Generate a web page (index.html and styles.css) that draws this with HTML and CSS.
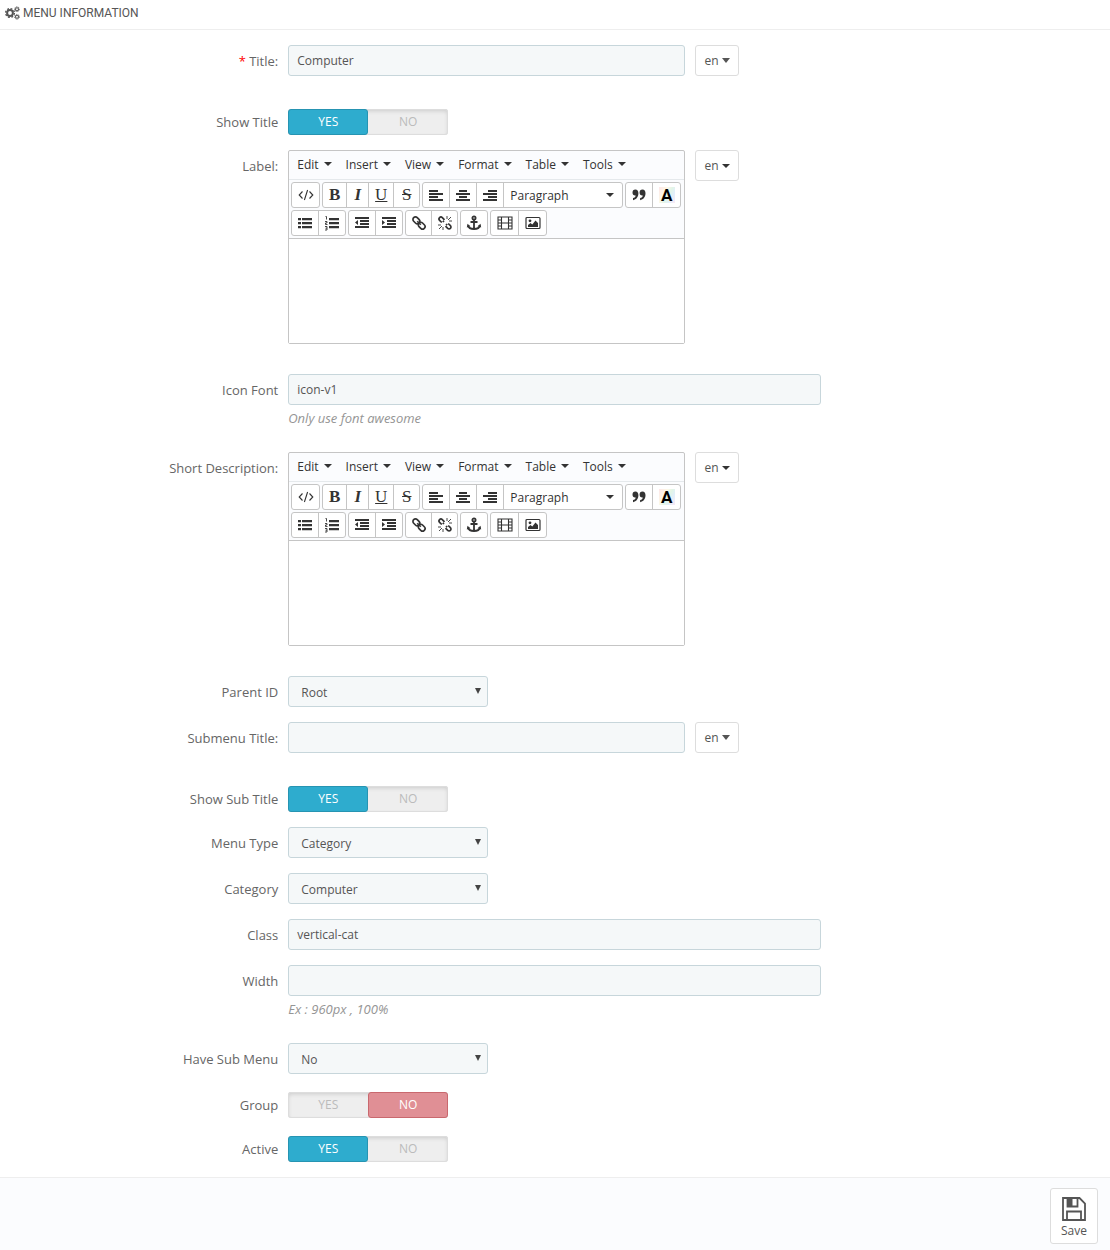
FILE: index.html
```html
<!DOCTYPE html>
<html lang="en">
<head>
    <meta charset="UTF-8">
    <meta name="viewport" content="width=device-width, initial-scale=1.0">
    <title>Menu Information</title>
    <link rel="stylesheet" href="styles.css">
</head>
<body>
    <!-- icon sprite -->
    <svg class="sprite" aria-hidden="true">
        <symbol id="i-cogs" viewBox="0 0 15 14">
            <circle cx="5" cy="7" r="2.9" fill="none" stroke="currentColor" stroke-width="2"/>
            <circle cx="5" cy="7" r="4.4" fill="none" stroke="currentColor" stroke-width="1.4" stroke-dasharray="1.9 1.556"/>
            <circle cx="12" cy="3.2" r="1.5" fill="none" stroke="currentColor" stroke-width="1.1"/>
            <circle cx="12" cy="3.2" r="2.4" fill="none" stroke="currentColor" stroke-width=".9" stroke-dasharray="1.1 .785"/>
            <circle cx="12" cy="10.8" r="1.5" fill="none" stroke="currentColor" stroke-width="1.1"/>
            <circle cx="12" cy="10.8" r="2.4" fill="none" stroke="currentColor" stroke-width=".9" stroke-dasharray="1.1 .785"/>
        </symbol>
        <symbol id="i-code" viewBox="0 0 16 16">
            <path d="M4.5 4.5L1.2 8l3.3 3.5M11.5 4.5L14.8 8l-3.3 3.5M9.6 3L6.4 13" fill="none" stroke="currentColor" stroke-width="1.1"/>
        </symbol>
        <symbol id="i-left" viewBox="0 0 16 16">
            <path d="M1 3h9v2H1zM1 6h14v2H1zM1 9h9v2H1zM1 12h14v2H1z"/>
        </symbol>
        <symbol id="i-center" viewBox="0 0 16 16">
            <path d="M4 3h8v2H4zM1 6h14v2H1zM4 9h8v2H4zM1 12h14v2H1z"/>
        </symbol>
        <symbol id="i-right" viewBox="0 0 16 16">
            <path d="M6 3h9v2H6zM1 6h14v2H1zM6 9h9v2H6zM1 12h14v2H1z"/>
        </symbol>
        <symbol id="i-quote" viewBox="0 0 16 16">
            <path d="M1.5 5.5a2.9 2.9 0 0 1 2.9-2.9C6.300 2.600 7.400 4 7.400 6.300c0 3.600-2 6.300-5.400 6.900V10.900c1.600-.3 2.500-1.200 2.700-2.500A2.900 2.900 0 0 1 1.500 5.500zM8.600 5.500a2.900 2.900 0 0 1 2.900-2.900c1.900 0 3 1.400 3 3.700 0 3.600-2 6.300-5.400 6.900V10.900c1.600-.3 2.500-1.200 2.700-2.500A2.900 2.900 0 0 1 8.600 5.500z"/>
        </symbol>
        <symbol id="i-ul" viewBox="0 0 16 16">
            <path d="M1 3h3v2.300H1zM1 7h3v2.300H1zM1 11h3v2.300H1zM5 3h10v2.300H5zM5 7h10v2.300H5zM5 11h10v2.300H5z"/>
        </symbol>
        <symbol id="i-ol" viewBox="0 0 16 16">
            <path d="M5 3h10v2.300H5zM5 7h10v2.300H5zM5 11h10v2.300H5z"/>
            <path d="M1.500 1.500h1v3M1 6.500h2v1.500H1.500v1.500H3.500M1 11.500h2v3.500H1M1.500 13.200H3" fill="none" stroke="currentColor" stroke-width=".9"/>
        </symbol>
        <symbol id="i-outdent" viewBox="0 0 16 16">
            <path d="M1 2h14v2H1zM6 5h9v2H6zM6 8h9v2H6zM1 11h14v2H1zM4 5v5L1 7.500z"/>
        </symbol>
        <symbol id="i-indent" viewBox="0 0 16 16">
            <path d="M1 2h14v2H1zM6 5h9v2H6zM6 8h9v2H6zM1 11h14v2H1zM1 5v5l3-2.500z"/>
        </symbol>
        <symbol id="i-link" viewBox="0 0 16 16">
            <g fill="none" stroke="currentColor" stroke-width="1.700" transform="rotate(45 8 8)">
                <rect x="0.500" y="5.500" width="7.500" height="5" rx="2.500"/>
                <rect x="8" y="5.500" width="7.500" height="5" rx="2.500"/>
                <path d="M5.500 8h5"/>
            </g>
        </symbol>
        <symbol id="i-unlink" viewBox="0 0 16 16">
            <g fill="none" stroke="currentColor" stroke-width="1.700">
                <path d="M7.500 4.800L5.300 2.600a1.900 1.900 0 0 0-2.700 2.700L4.800 7.500M8.500 11.200l2.200 2.200a1.900 1.900 0 0 0 2.700-2.700L11.200 8.500M5.800 5.800l1.200 1.200M9 9l1.200 1.200"/>
                <path d="M10 1v3M14 2l-3 3M15 6h-3M1 10h3M2 14l3-3M6 15v-3" stroke-width=".9"/>
            </g>
        </symbol>
        <symbol id="i-anchor" viewBox="0 0 16 16">
            <g fill="none" stroke="currentColor" stroke-width="1.800">
                <circle cx="8" cy="3" r="1.600"/>
                <path d="M8 4.500V14M4.500 7h7M2 10.500c.5 2.300 2.800 3.500 6 3.500s5.500-1.200 6-3.500"/>
            </g>
            <path d="M.8 12.500l.7-3.700 3 2.400zM15.200 12.500l-.7-3.700-3 2.400z"/>
        </symbol>
        <symbol id="i-film" viewBox="0 0 16 16">
            <path d="M1 2h14v12H1zM4.500 2v12M11.500 2v12M4.500 8h7M1 5h3.500M1 8h3.500M1 11h3.500M11.500 5H15M11.500 8H15M11.500 11H15" fill="none" stroke="currentColor" stroke-width="1.100"/>
        </symbol>
        <symbol id="i-image" viewBox="0 0 16 16">
            <rect x="1" y="2.500" width="14" height="11" rx="1" fill="none" stroke="currentColor" stroke-width="1.200"/>
            <circle cx="5" cy="5.800" r="1.400"/>
            <path d="M3 12V10l2.500-2 1.800 1.600L10.500 5.500 13 8v4z"/>
        </symbol>
        <symbol id="i-save" viewBox="0 0 24 24">
            <path d="M1 1h16.500L23 6.500V23H1zM5 23v-8.500h14V23M5.500 1v8.500H15.500V1" fill="none" stroke="currentColor" stroke-width="1.800"/>
            <path d="M5.500 1h5v8.500h-5z"/>
        </symbol>
    </svg>

    <form class="panel">
        <h3 class="panel-heading"><svg><use href="#i-cogs"/></svg>Menu Information</h3>

        <div class="form-wrapper">
            <div class="form-group lang-group">
                <label class="control-label" for="title"><span class="required">*</span> Title:</label>
                <div class="field">
                    <div class="col-half"><input type="text" class="form-control" id="title" value="Computer"></div>
                    <button type="button" class="btn-lang">en<i class="caret-fa"></i></button>
                </div>
            </div>

            <div class="form-group">
                <span class="control-label" id="show-title">Show Title</span>
                <div class="field">
                    <div class="switch" role="radiogroup" aria-labelledby="show-title">
                        <input type="radio" name="show_title" id="show_title_on" checked><label for="show_title_on">Yes</label>
                        <input type="radio" name="show_title" id="show_title_off" class="off"><label for="show_title_off">No</label>
                    </div>
                </div>
            </div>

            <div class="form-group lang-group">
                <label class="control-label" for="label">Label:</label>
                <div class="field">
                    <div class="col-half">
                        <div class="editor">
                            <div class="menubar">
                                <button type="button">Edit<i class="caret"></i></button>
                                <button type="button">Insert<i class="caret"></i></button>
                                <button type="button">View<i class="caret"></i></button>
                                <button type="button">Format<i class="caret"></i></button>
                                <button type="button">Table<i class="caret"></i></button>
                                <button type="button">Tools<i class="caret"></i></button>
                            </div>
                            <div class="toolbar">
                                <div class="btn-group btn-code">
                                    <button type="button" aria-label="Source code"><svg><use href="#i-code"/></svg></button>
                                </div>
                                <div class="btn-group btn-text">
                                    <button type="button" class="bold">B</button>
                                    <button type="button" class="italic">I</button>
                                    <button type="button" class="underline">U</button>
                                    <button type="button" class="strike">S</button>
                                </div>
                                <div class="btn-group">
                                    <button type="button" aria-label="Align left"><svg><use href="#i-left"/></svg></button>
                                    <button type="button" aria-label="Align center"><svg><use href="#i-center"/></svg></button>
                                    <button type="button" aria-label="Align right"><svg><use href="#i-right"/></svg></button>
                                    <div class="format-select">
                                        <select aria-label="Block format"><option>Paragraph</option></select>
                                        <i class="caret"></i>
                                    </div>
                                </div>
                                <div class="btn-group">
                                    <button type="button" aria-label="Blockquote"><svg><use href="#i-quote"/></svg></button>
                                    <button type="button" class="color" aria-label="Text color"><span>A</span></button>
                                </div>
                                <div class="btn-group">
                                    <button type="button" aria-label="Bullet list"><svg><use href="#i-ul"/></svg></button>
                                    <button type="button" aria-label="Numbered list"><svg><use href="#i-ol"/></svg></button>
                                </div>
                                <div class="btn-group">
                                    <button type="button" aria-label="Decrease indent"><svg><use href="#i-outdent"/></svg></button>
                                    <button type="button" aria-label="Increase indent"><svg><use href="#i-indent"/></svg></button>
                                </div>
                                <div class="btn-group btn-link">
                                    <button type="button" aria-label="Insert link"><svg><use href="#i-link"/></svg></button>
                                    <button type="button" aria-label="Remove link"><svg><use href="#i-unlink"/></svg></button>
                                </div>
                                <div class="btn-group">
                                    <button type="button" aria-label="Anchor"><svg><use href="#i-anchor"/></svg></button>
                                </div>
                                <div class="btn-group btn-media">
                                    <button type="button" aria-label="Insert video"><svg><use href="#i-film"/></svg></button>
                                    <button type="button" aria-label="Insert image"><svg><use href="#i-image"/></svg></button>
                                </div>
                            </div>
                            <textarea id="label"></textarea>
                        </div>
                    </div>
                    <button type="button" class="btn-lang">en<i class="caret"></i></button>
                </div>
            </div>

            <div class="form-group">
                <label class="control-label" for="icon">Icon Font</label>
                <div class="field">
                    <div class="col-wide">
                        <input type="text" class="form-control" id="icon" value="icon-v1">
                        <p class="help-block">Only use font awesome</p>
                    </div>
                </div>
            </div>

            <div class="form-group lang-group">
                <label class="control-label" for="description">Short Description:</label>
                <div class="field">
                    <div class="col-half">
                        <div class="editor">
                            <div class="menubar">
                                <button type="button">Edit<i class="caret"></i></button>
                                <button type="button">Insert<i class="caret"></i></button>
                                <button type="button">View<i class="caret"></i></button>
                                <button type="button">Format<i class="caret"></i></button>
                                <button type="button">Table<i class="caret"></i></button>
                                <button type="button">Tools<i class="caret"></i></button>
                            </div>
                            <div class="toolbar">
                                <div class="btn-group btn-code">
                                    <button type="button" aria-label="Source code"><svg><use href="#i-code"/></svg></button>
                                </div>
                                <div class="btn-group btn-text">
                                    <button type="button" class="bold">B</button>
                                    <button type="button" class="italic">I</button>
                                    <button type="button" class="underline">U</button>
                                    <button type="button" class="strike">S</button>
                                </div>
                                <div class="btn-group">
                                    <button type="button" aria-label="Align left"><svg><use href="#i-left"/></svg></button>
                                    <button type="button" aria-label="Align center"><svg><use href="#i-center"/></svg></button>
                                    <button type="button" aria-label="Align right"><svg><use href="#i-right"/></svg></button>
                                    <div class="format-select">
                                        <select aria-label="Block format"><option>Paragraph</option></select>
                                        <i class="caret"></i>
                                    </div>
                                </div>
                                <div class="btn-group">
                                    <button type="button" aria-label="Blockquote"><svg><use href="#i-quote"/></svg></button>
                                    <button type="button" class="color" aria-label="Text color"><span>A</span></button>
                                </div>
                                <div class="btn-group">
                                    <button type="button" aria-label="Bullet list"><svg><use href="#i-ul"/></svg></button>
                                    <button type="button" aria-label="Numbered list"><svg><use href="#i-ol"/></svg></button>
                                </div>
                                <div class="btn-group">
                                    <button type="button" aria-label="Decrease indent"><svg><use href="#i-outdent"/></svg></button>
                                    <button type="button" aria-label="Increase indent"><svg><use href="#i-indent"/></svg></button>
                                </div>
                                <div class="btn-group btn-link">
                                    <button type="button" aria-label="Insert link"><svg><use href="#i-link"/></svg></button>
                                    <button type="button" aria-label="Remove link"><svg><use href="#i-unlink"/></svg></button>
                                </div>
                                <div class="btn-group">
                                    <button type="button" aria-label="Anchor"><svg><use href="#i-anchor"/></svg></button>
                                </div>
                                <div class="btn-group btn-media">
                                    <button type="button" aria-label="Insert video"><svg><use href="#i-film"/></svg></button>
                                    <button type="button" aria-label="Insert image"><svg><use href="#i-image"/></svg></button>
                                </div>
                            </div>
                            <textarea id="description"></textarea>
                        </div>
                    </div>
                    <button type="button" class="btn-lang">en<i class="caret"></i></button>
                </div>
            </div>

            <div class="form-group">
                <label class="control-label" for="parent">Parent ID</label>
                <div class="field">
                    <div class="select"><select class="form-control" id="parent"><option>Root</option></select></div>
                </div>
            </div>

            <div class="form-group lang-group">
                <label class="control-label" for="submenu">Submenu Title:</label>
                <div class="field">
                    <div class="col-half"><input type="text" class="form-control" id="submenu"></div>
                    <button type="button" class="btn-lang">en<i class="caret-fa"></i></button>
                </div>
            </div>

            <div class="form-group">
                <span class="control-label" id="show-sub">Show Sub Title</span>
                <div class="field">
                    <div class="switch" role="radiogroup" aria-labelledby="show-sub">
                        <input type="radio" name="show_sub" id="show_sub_on" checked><label for="show_sub_on">Yes</label>
                        <input type="radio" name="show_sub" id="show_sub_off" class="off"><label for="show_sub_off">No</label>
                    </div>
                </div>
            </div>

            <div class="form-group">
                <label class="control-label" for="type">Menu Type</label>
                <div class="field">
                    <div class="select"><select class="form-control" id="type"><option>Category</option></select></div>
                </div>
            </div>

            <div class="form-group">
                <label class="control-label" for="category">Category</label>
                <div class="field">
                    <div class="select"><select class="form-control" id="category"><option>Computer</option></select></div>
                </div>
            </div>

            <div class="form-group">
                <label class="control-label" for="class">Class</label>
                <div class="field">
                    <div class="col-wide"><input type="text" class="form-control" id="class" value="vertical-cat"></div>
                </div>
            </div>

            <div class="form-group">
                <label class="control-label" for="width">Width</label>
                <div class="field">
                    <div class="col-wide">
                        <input type="text" class="form-control" id="width">
                        <p class="help-block">Ex : 960px , 100%</p>
                    </div>
                </div>
            </div>

            <div class="form-group">
                <label class="control-label" for="have-sub">Have Sub Menu</label>
                <div class="field">
                    <div class="select"><select class="form-control" id="have-sub"><option>No</option></select></div>
                </div>
            </div>

            <div class="form-group">
                <span class="control-label" id="group">Group</span>
                <div class="field">
                    <div class="switch" role="radiogroup" aria-labelledby="group">
                        <input type="radio" name="group" id="group_on"><label for="group_on">Yes</label>
                        <input type="radio" name="group" id="group_off" class="off" checked><label for="group_off">No</label>
                    </div>
                </div>
            </div>

            <div class="form-group">
                <span class="control-label" id="active">Active</span>
                <div class="field">
                    <div class="switch" role="radiogroup" aria-labelledby="active">
                        <input type="radio" name="active" id="active_on" checked><label for="active_on">Yes</label>
                        <input type="radio" name="active" id="active_off" class="off"><label for="active_off">No</label>
                    </div>
                </div>
            </div>
        </div>

        <div class="panel-footer">
            <button type="submit" class="btn-save"><svg><use href="#i-save"/></svg>Save</button>
        </div>
    </form>
</body>
</html>
```

FILE: styles.css
```css
* {
    box-sizing: border-box;
}

body {
    margin: 0;
    font-family: "Open Sans", sans-serif;
    font-size: 12px;
    color: #555;
    background-color: #fff;
}

button, input, select, textarea {
    font: inherit;
    color: inherit;
}

button {
    padding: 0;
    cursor: pointer;
}

svg {
    fill: currentColor;
}

.sprite {
    display: none;
}

.panel-heading {
    display: flex;
    align-items: center;
    gap: 3px;
    height: 30px;
    margin: 0;
    padding: 0 5px 4px;
    border-bottom: 1px solid #eee;
    font-family: "Roboto", sans-serif;
    font-size: 12px;
    font-weight: normal;
    text-transform: uppercase;
}

.panel-heading svg {
    width: 15px;
    height: 14px;
}

.form-wrapper {
    padding: 15px 13px 0 12px;
}

.form-group {
    display: flex;
    margin-bottom: 15px;
}

.lang-group {
    margin-bottom: 30px;
}

.control-label {
    width: 25%;
    height: 29px;
    padding: 0 5px;
    font-size: 13px;
    line-height: 32px;
    text-align: right;
    color: #666;
}

.required {
    color: red;
}

.field {
    display: flex;
    align-items: flex-start;
    width: 75%;
}

.col-half {
    width: 50%;
    padding: 0 5px;
}

.col-wide {
    width: 66.667%;
    padding: 0 5px;
}

.form-control {
    display: block;
    width: 100%;
    height: 31px;
    padding: 0 8px;
    border: 1px solid #c7d6db;
    border-radius: 3px;
    background-color: #f5f8f9;
}

.help-block {
    height: 32px;
    margin: 0;
    font-size: 13px;
    line-height: 26px;
    font-style: italic;
    color: #959595;
}

.select {
    position: relative;
    width: 200px;
    margin-left: 5px;
}

.select .form-control {
    appearance: none;
    padding: 2px 12px 0;
}

.select::after {
    content: "";
    position: absolute;
    top: 12px;
    right: 7px;
    border: 3px solid transparent;
    border-top: 6px solid #444;
    border-bottom: 0;
    pointer-events: none;
}

.btn-lang {
    display: flex;
    align-items: center;
    justify-content: center;
    gap: 3px;
    width: 44px;
    height: 31px;
    margin-left: 5px;
    border: 1px solid #ddd;
    border-radius: 3px;
    background-color: #fff;
}

.caret, .caret-fa {
    border: 4px solid transparent;
    border-top-color: #333;
    border-bottom: 0;
}

.caret-fa {
    border-width: 5px 4px 0;
    border-top-color: #555;
}

/* yes / no switch */
.switch {
    display: flex;
    width: 160px;
    height: 26px;
    margin: 3px 0 0 5px;
    border-radius: 3px;
    background-color: #eee;
    box-shadow: inset 0 0 0 1px #ddd, inset 0 2px 4px rgba(0, 0, 0, 0.15);
}

.switch input {
    position: absolute;
    opacity: 0;
}

.switch label {
    width: 50%;
    border: 1px solid transparent;
    border-radius: 3px;
    line-height: 23px;
    text-align: center;
    text-transform: uppercase;
    color: #bbb;
    cursor: pointer;
}

.switch input:checked + label {
    border-color: #2694b2;
    background-color: #2eacce;
    color: #fff;
}

.switch .off:checked + label {
    border-color: #c9686e;
    background-color: #e08f95;
}

/* editor */
.editor {
    border: 1px solid #c5c5c5;
    border-radius: 2px;
    background-color: #fbfcfe;
    color: #333;
}

.menubar {
    display: flex;
    gap: 14px;
    height: 29px;
    padding: 0 8px 2px;
    border-bottom: 1px solid #e5e9ec;
}

.menubar button {
    display: flex;
    align-items: center;
    gap: 5px;
    border: none;
    background: none;
}

.toolbar {
    display: flex;
    flex-wrap: wrap;
    gap: 2px;
    padding: 2px;
    border-bottom: 1px solid #c5c5c5;
}

.btn-group {
    display: flex;
    height: 26px;
    border: 1px solid #c5c5c5;
    border-radius: 3px;
    background-color: #fff;
}

.btn-group button {
    display: flex;
    align-items: center;
    justify-content: center;
    width: 27px;
    border: 0 solid #c5c5c5;
    background: none;
}

.btn-group button:first-child {
    width: 26px;
}

.btn-group button + button,
.format-select {
    border-left: 1px solid #c5c5c5;
}

.btn-group svg {
    width: 16px;
    height: 16px;
}

.btn-code button:first-child,
.btn-media button:first-child {
    width: 27px;
}

.btn-media button {
    width: 28px;
}

.btn-text button {
    width: 25px;
    font-family: "Liberation Serif", serif;
    font-size: 17px;
}

.btn-text .bold:first-child {
    width: 23px;
    font-weight: bold;
}

.btn-text .italic {
    width: 22px;
    font-style: italic;
    font-weight: bold;
}

.underline {
    text-decoration: underline;
}

.btn-text .strike {
    width: 26px;
    text-decoration: line-through;
}

.btn-link button {
    width: 26px;
}

.btn-link button:first-child {
    width: 25px;
}

.format-select {
    display: flex;
    align-items: center;
    width: 119px;
    padding-right: 8px;
}

.format-select select {
    appearance: none;
    flex: 1;
    min-width: 0;
    padding: 0 6px;
    border: none;
    background: none;
}

.btn-group .color {
    width: 28px;
}

.color span {
    width: 16px;
    height: 16px;
    background: linear-gradient(120deg, #fde6e8, #fdf8e6 35%, #e2f5e8 55%, #e2effb 75%, #fbe8f5);
    color: #000;
    font-family: "Roboto", sans-serif;
    font-size: 17px;
    font-weight: bold;
    line-height: 17px;
}

.editor textarea {
    display: block;
    width: 100%;
    height: 104px;
    border: none;
    background-color: #fff;
    resize: none;
}

.panel-footer {
    display: flex;
    justify-content: flex-end;
    padding: 10px 12px 6px;
    border-top: 1px solid #eee;
    background-color: #fbfcfe;
}

.btn-save {
    display: flex;
    flex-direction: column;
    align-items: center;
    justify-content: flex-end;
    gap: 1px;
    width: 48px;
    height: 56px;
    padding-bottom: 4px;
    border: 1px solid #ddd;
    border-radius: 3px;
    background-color: #fff;
}

.btn-save svg {
    width: 24px;
    height: 24px;
}
```
